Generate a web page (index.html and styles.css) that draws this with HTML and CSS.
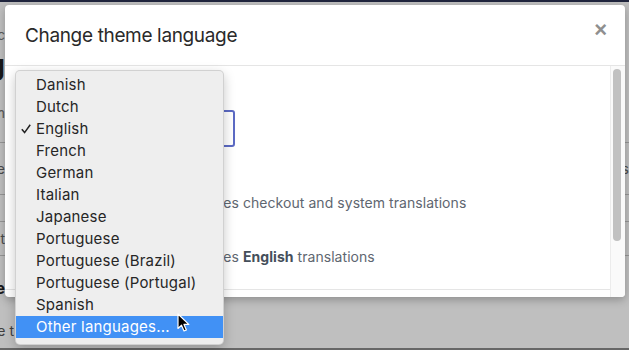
FILE: index.html
```html
<!DOCTYPE html>
<html>
<head>
<meta charset="utf-8">
<link rel="stylesheet" href="styles.css">
</head>
<body>
<div class="topbar"></div>
<main class="page">
  <div class="prow r-crumb"><span class="clip"><span>Online Store / Themes / Doc</span></span><span class="clip"></span></div>
  <div class="prow r-title"><span class="clip"><span>Languag</span></span><span class="clip"></span></div>
  <div class="prow r-sub"><span class="clip"><span>Custom</span></span><span class="clip"></span></div>
  <div class="ptable">
    <div class="prow r-t1"><span class="clip"><span>Checkout page</span></span><span class="clip"><span>Details</span></span></div>
    <div class="prow r-t2"><span class="clip"></span><span class="clip"></span></div>
    <div class="prow r-t3"><span class="clip"><span>Default</span></span><span class="clip"></span></div>
  </div>
  <div class="prow r-h2"><span class="clip"><span>Theme</span></span><span class="clip"></span></div>
  <div class="prow r-foot"><span class="clip wide"><span>Use t</span></span><span class="clip"></span></div>
</main>
<div class="backdrop"></div>

<div class="modal">
  <div class="modal-header">
    <h2 class="modal-title">Change theme language</h2>
    <span class="close">×</span>
  </div>
  <div class="modal-body">
    <div class="content">
      <div class="field">
        <label class="label">Language</label>
        <div class="select">English</div>
      </div>
      <div class="option">
        <span class="radio"></span>
        <p class="opt-text">Theme includes checkout and system translations</p>
      </div>
      <div class="option">
        <span class="radio"></span>
        <p class="opt-text">Theme includes <b>English</b> translations</p>
      </div>
    </div>
    <div class="scrollbar"><div class="thumb"></div></div>
  </div>
</div>

<ul class="menu">
  <li class="item">Danish</li>
  <li class="item">Dutch</li>
  <li class="item checked"><svg class="check" width="10" height="10" viewBox="0 0 10 10"><path d="M0.8 5.2 L3.6 8.6 L9.2 0.8" fill="none" stroke="#222" stroke-width="1.5"/></svg>English</li>
  <li class="item">French</li>
  <li class="item">German</li>
  <li class="item">Italian</li>
  <li class="item">Japanese</li>
  <li class="item">Portuguese</li>
  <li class="item">Portuguese (Brazil)</li>
  <li class="item">Portuguese (Portugal)</li>
  <li class="item">Spanish</li>
  <li class="item active">Other languages...</li>
</ul>

<svg class="cursor" width="14" height="20" viewBox="0 0 14 20"><path d="M1 1 L1 15.5 L4.5 12.2 L7 18 L9.4 17 L7 11.4 L11.8 11.4 Z" fill="#000" stroke="#fff" stroke-width="1.2" stroke-linejoin="round"/></svg>
</body>
</html>
```
FILE: styles.css
```css
* { box-sizing: border-box; }
html, body { margin: 0; padding: 0; }
body {
  width: 629px;
  height: 350px;
  overflow: hidden;
  position: relative;
  background: #ffffff;
  font-family: Inter, "Noto Sans", sans-serif;
}
.topbar { height: 2px; background: #2b3252; }
.page { display: flex; flex-direction: column; height: 348px; border-bottom: 2px solid #8a8a8a; }
.prow { display: flex; justify-content: space-between; align-items: center; }
.clip { width: 5px; overflow: hidden; display: flex; justify-content: flex-end; white-space: nowrap; }
.clip.wide { width: 14px; }
.r-crumb { height: 66px; font-size: 13px; color: #777; }
.r-title { height: 14px; font-size: 28px; font-weight: 700; color: #222; align-items: flex-end; }
.r-sub { height: 60px; font-size: 14px; color: #777; }
.ptable { border-top: 1px solid #c9c9c9; border-bottom: 1px solid #c9c9c9; }
.r-t1 { height: 52px; font-size: 14px; color: #666; border-bottom: 1px solid #c9c9c9; }
.r-t2 { height: 27px; border-bottom: 1px solid #c9c9c9; }
.r-t3 { height: 33px; font-size: 14px; color: #666; }
.r-h2 { height: 64px; font-size: 16px; font-weight: 700; color: #222; }
.r-foot { height: 20px; font-size: 14px; color: #555; }

.backdrop { position: absolute; inset: 0; background: rgba(0,0,0,0.25); }

.modal {
  position: absolute; left: 5px; top: 5px; width: 620px; height: 292px;
  background: #fff; border-radius: 4px; overflow: hidden;
  box-shadow: 0 3px 9px rgba(0,0,0,0.25);
  display: flex; flex-direction: column;
}
.modal-header {
  height: 61px; flex: none; border-bottom: 1px solid #e5e5e5;
  display: flex; align-items: center; justify-content: space-between;
  padding: 0 18px 0 20px;
}
.modal-title { margin: 0; font-size: 19px; font-weight: 400; color: #2a2a2a; letter-spacing: -0.35px; }
.close { font-size: 22px; font-weight: 700; color: #8f8f8f; line-height: 1; margin-top: -10px; font-family: "Liberation Sans", sans-serif; }
.modal-body { flex: 1; display: flex; min-height: 0; }
.content { flex: 1; padding: 21px 20px 0 20px; border-bottom: 1px solid #e5e5e5; margin-bottom: 7px; }
.field { display: flex; flex-direction: column; gap: 6px; }
.label { font-size: 14px; color: #212b36; }
.select { width: 210px; height: 37px; border: 2px solid #5c6ac4; border-radius: 3px; padding: 8px 10px; font-size: 14px; color: #212b36; }
.option { display: flex; align-items: center; gap: 8px; padding-left: 84px; }
.radio { width: 16px; height: 16px; border-radius: 50%; border: 1px solid #c4cdd5; flex: none; }
.opt-text { margin: 0; font-size: 14px; letter-spacing: 0.05px; color: #5e6670; white-space: nowrap; }
.opt-text b { color: #454f5b; font-weight: 700; }
.field + .option { margin-top: 47px; }
.option + .option { margin-top: 37px; }
.scrollbar { width: 15px; flex: none; border-left: 1px solid #ececec; background: #fafafa; padding: 3px 3px 0 2px; }
.thumb { width: 8px; height: 172px; border-radius: 4px; background: #c1c1c1; }

.menu {
  position: absolute; left: 15px; top: 70px; width: 209px;
  margin: 0; padding: 3px 0 6px; list-style: none;
  background: #eeeeee; border-radius: 5px;
  border: 1px solid rgba(0,0,0,0.12);
  box-shadow: 0 4px 12px rgba(0,0,0,0.22);
}
.item { height: 22px; line-height: 22px; padding-left: 20px; font-size: 15px; letter-spacing: 0.2px; color: #262626; position: relative; }
.check { position: absolute; left: 5px; top: 6px; }
.item.active { background: #4191f5; color: #fff; }
.cursor { position: absolute; left: 177px; top: 313px; }
```
